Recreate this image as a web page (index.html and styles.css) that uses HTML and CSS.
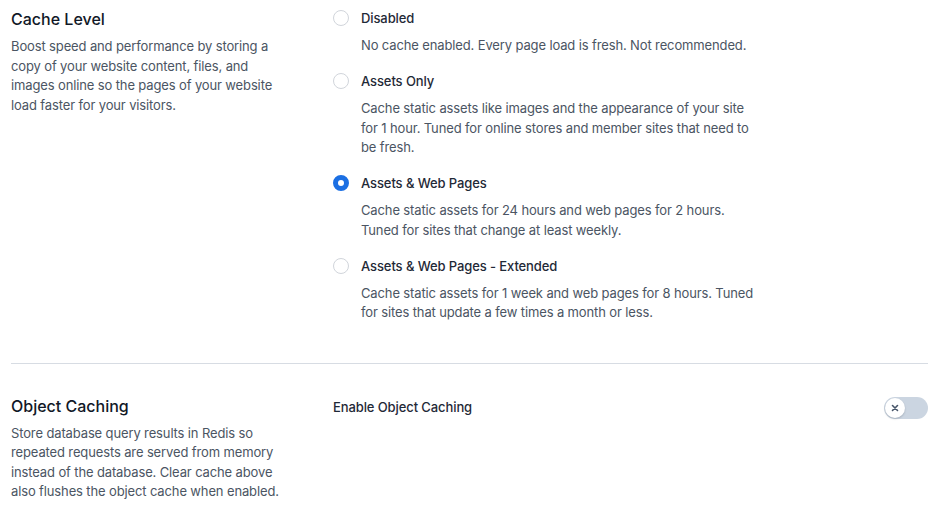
FILE: index.html
```html
<!DOCTYPE html>
<html lang="en">
<head>
    <meta charset="UTF-8">
    <meta name="viewport" content="width=device-width, initial-scale=1.0">
    <title>Caching Settings</title>
    <link rel="stylesheet" href="styles.css">
</head>
<body>
    <div class="settings">
        <section class="setting">
            <div class="setting-info">
                <h2 class="setting-title">Cache Level</h2>
                <p class="setting-desc">Boost speed and performance by storing a copy of your website content, files, and images online so the pages of your website load faster for your visitors.</p>
            </div>
            <div class="setting-control">
                <div class="radio-list">
                    <label class="radio-option">
                        <span class="radio-row">
                            <input type="radio" name="cache-level" value="disabled">
                            <span class="radio-label">Disabled</span>
                        </span>
                        <span class="radio-desc">No cache enabled. Every page load is fresh. Not recommended.</span>
                    </label>
                    <label class="radio-option">
                        <span class="radio-row">
                            <input type="radio" name="cache-level" value="assets">
                            <span class="radio-label">Assets Only</span>
                        </span>
                        <span class="radio-desc">Cache static assets like images and the appearance of your site for 1 hour. Tuned for online stores and member sites that need to be fresh.</span>
                    </label>
                    <label class="radio-option">
                        <span class="radio-row">
                            <input type="radio" name="cache-level" value="pages" checked>
                            <span class="radio-label">Assets &amp; Web Pages</span>
                        </span>
                        <span class="radio-desc">Cache static assets for 24 hours and web pages for 2 hours. Tuned for sites that change at least weekly.</span>
                    </label>
                    <label class="radio-option">
                        <span class="radio-row">
                            <input type="radio" name="cache-level" value="extended">
                            <span class="radio-label">Assets &amp; Web Pages - Extended</span>
                        </span>
                        <span class="radio-desc">Cache static assets for 1 week and web pages for 8 hours. Tuned for sites that update a few times a month or less.</span>
                    </label>
                </div>
            </div>
        </section>

        <section class="setting setting-bordered">
            <div class="setting-info">
                <h2 class="setting-title">Object Caching</h2>
                <p class="setting-desc">Store database query results in Redis so repeated requests are served from memory instead of the database. Clear cache above also flushes the object cache when enabled.</p>
            </div>
            <div class="setting-control">
                <div class="toggle-row">
                    <span class="toggle-label">Enable Object Caching</span>
                    <button class="toggle" type="button" aria-pressed="false">
                        <span class="toggle-knob">
                            <svg width="8" height="8" viewBox="0 0 8 8">
                                <path d="M1.5 1.5l5 5M6.5 1.5l-5 5" stroke="#475569" stroke-width="1.6" stroke-linecap="round"/>
                            </svg>
                        </span>
                    </button>
                </div>
            </div>
        </section>
    </div>
</body>
</html>
```

FILE: styles.css
```css
body {
    margin: 0;
    background: #fff;
    font-family: Inter, "Noto Sans", Arial, sans-serif;
    -webkit-font-smoothing: antialiased;
}

.settings {
    padding: 7px 17px 0 11px;
}

.setting {
    display: flex;
}

.setting-bordered {
    border-top: 1px solid #d7dce3;
    margin-top: 40px;
    padding-top: 30px;
}

.setting-info {
    width: 322px;
    flex-shrink: 0;
}

.setting-title {
    margin: 0;
    font-size: 16px;
    line-height: 24px;
    font-weight: 500;
    color: #111827;
}

.setting-desc {
    margin: 6px 0 0;
    width: 272px;
    font-size: 13px;
    line-height: 19.5px;
    letter-spacing: -0.13px;
    color: #4b5563;
}

.setting-control {
    flex: 1;
}

.radio-list {
    display: flex;
    flex-direction: column;
    gap: 15.5px;
    width: 430px;
    padding-top: 1px;
}

.radio-option {
    display: flex;
    flex-direction: column;
    cursor: pointer;
}

.radio-row {
    display: flex;
    align-items: center;
    height: 20px;
}

.radio-row input {
    appearance: none;
    margin: 0 12px 0 0;
    width: 16px;
    height: 16px;
    border: 1px solid #d1d5db;
    border-radius: 50%;
    background: #fff;
    flex-shrink: 0;
}

.radio-row input:checked {
    border: 5px solid #1b6fe3;
}

.radio-label {
    font-size: 13px;
    font-weight: 500;
    letter-spacing: -0.1px;
    color: #1f2937;
}

.radio-desc {
    margin-top: 8px;
    padding-left: 28px;
    font-size: 13px;
    line-height: 19.5px;
    letter-spacing: -0.13px;
    color: #4b5563;
}

.toggle-row {
    display: flex;
    align-items: center;
    justify-content: space-between;
    height: 26px;
}

.toggle-label {
    font-size: 13px;
    font-weight: 500;
    letter-spacing: -0.1px;
    color: #1f2937;
}

.toggle {
    width: 44px;
    height: 22px;
    padding: 1px;
    border: none;
    border-radius: 11px;
    background: #cbd5e1;
    display: flex;
    align-items: center;
    margin-top: 3px;
    cursor: pointer;
}

.toggle-knob {
    width: 20px;
    height: 20px;
    border-radius: 50%;
    background: #fff;
    box-shadow: 0 1px 2px rgba(15, 23, 42, 0.2);
    display: flex;
    align-items: center;
    justify-content: center;
}
```
